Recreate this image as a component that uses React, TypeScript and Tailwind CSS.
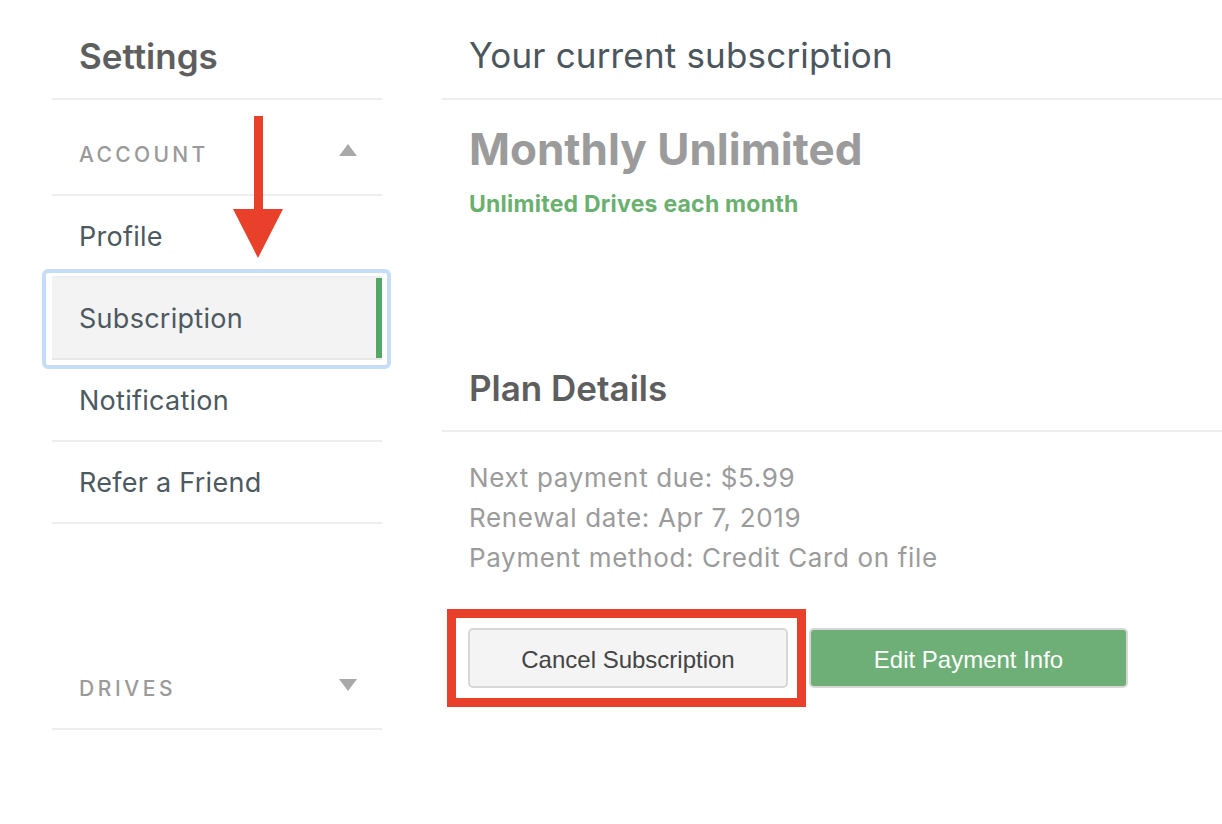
import React from "react";

const font = { fontFamily: "Inter, 'Open Sans', sans-serif" };

function Caret({ up }: { up?: boolean }) {
  return (
    <svg width="18" height="12" viewBox="0 0 18 12" className="mr-[25px]">
      {up ? (
        <polygon points="9,0 18,12 0,12" fill="#a9a9a9" />
      ) : (
        <polygon points="0,0 18,0 9,12" fill="#a9a9a9" />
      )}
    </svg>
  );
}

function NavItem({ label }: { label: string }) {
  return (
    <div className="h-[82px] flex items-center pl-[27px] pt-[2px] border-b-2 border-[#eeeeee] text-[27px] tracking-[0.01em] text-[#4d5960]">
      {label}
    </div>
  );
}

export default function App() {
  return (
    <div className="w-[1222px] h-[824px] bg-white relative overflow-hidden" style={font}>
      <div className="flex">
        {/* Sidebar */}
        <div className="ml-[52px] w-[330px] flex flex-col">
          <div className="h-[100px] flex items-center pl-[27px] pt-[14px] border-b-2 border-[#eeeeee] text-[35px] font-semibold text-[#5e5e5e]">
            Settings
          </div>
          <div className="h-[96px] flex items-center justify-between pl-[27px] pt-[16px] border-b-2 border-[#eeeeee]">
            <span className="text-[21px] font-medium tracking-[0.16em] text-[#9a9a9a]">ACCOUNT</span>
            <span className="-mt-[10px]"><Caret up /></span>
          </div>
          <NavItem label="Profile" />
          <div className="relative h-[82px]">
            <div className="absolute -left-[10px] -right-[9px] -top-[9px] -bottom-[9px] rounded-[6px] border-[4px] border-[#c6ddf7]" />
            <div className="h-full flex items-center pl-[27px] pt-[2px] bg-[#f3f3f3] border-b-2 border-[#e8e8e8] text-[27px] tracking-[0.01em] text-[#4d5960] relative">
              Subscription
              <div className="absolute right-0 top-0 bottom-0 w-[6px] bg-[#54a865]" />
            </div>
          </div>
          <NavItem label="Notification" />
          <NavItem label="Refer a Friend" />
          <div className="h-[112px]" />
          <div className="h-[94px] flex items-center justify-between pl-[27px] pt-[14px] border-b-2 border-[#eeeeee]">
            <span className="text-[21px] font-medium tracking-[0.17em] text-[#9a9a9a]">DRIVES</span>
            <span className="-mt-[8px]"><Caret /></span>
          </div>
        </div>

        {/* Main */}
        <div className="ml-[60px] flex-1 flex flex-col">
          <div className="h-[100px] flex items-center pl-[27px] pt-[12px] border-b-2 border-[#eeeeee] text-[35px] tracking-[0.005em] text-[#4b565d]">
            Your current subscription
          </div>
          <div className="pl-[27px]">
            <div className="mt-[21px] text-[44px] leading-[56px] font-bold text-[#9b9b9b]">
              Monthly Unlimited
            </div>
            <div className="mt-[12px] text-[23px] leading-[30px] font-bold tracking-[0.01em] text-[#6ab06f]">
              Unlimited Drives each month
            </div>
          </div>
          <div className="mt-[143px] h-[70px] flex items-center pl-[27px] border-b-2 border-[#eeeeee] text-[35px] font-semibold text-[#5e5e5e] pb-[16px]">
            Plan Details
          </div>
          <div className="pl-[27px] mt-[26px] text-[26px] leading-[40px] tracking-[0.025em] text-[#9b9b9b]">
            <div>Next payment due: $5.99</div>
            <div>Renewal date: Apr 7, 2019</div>
            <div>Payment method: Credit Card on file</div>
          </div>
          <div className="pl-[26px] mt-[50px] flex gap-[21px]" style={{ fontFamily: "'Liberation Sans', Arial, sans-serif" }}>
            <button className="w-[320px] h-[60px] pt-[3px] rounded-[5px] border-2 border-[#d7d7d7] bg-[#f4f4f4] text-[24px] text-[#444444]">
              Cancel Subscription
            </button>
            <button className="w-[319px] h-[60px] pt-[3px] rounded-[5px] border-2 border-[#d7d7d7] bg-[#6daf76] text-[24px] text-white">
              Edit Payment Info
            </button>
          </div>
        </div>
      </div>

      {/* Annotation overlays */}
      <div className="absolute left-[447px] top-[609px] w-[359px] h-[98px] border-[9px] border-[#e8402a]" />
      <svg className="absolute left-[233px] top-[116px]" width="50" height="143" viewBox="0 0 50 143">
        <rect x="21" y="0" width="9" height="95" fill="#e8402a" />
        <polygon points="0,93 50,93 25,142" fill="#e8402a" />
      </svg>
    </div>
  );
}
